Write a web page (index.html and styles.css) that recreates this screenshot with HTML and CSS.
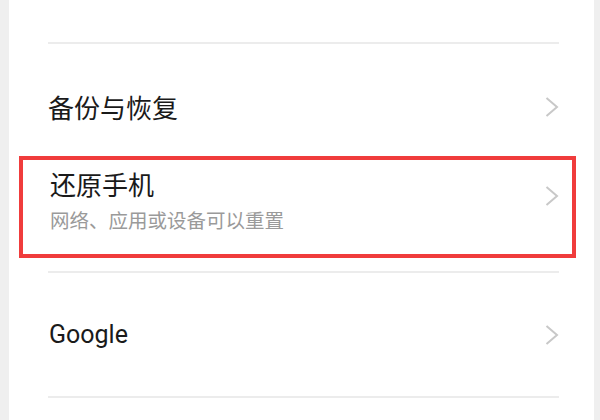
FILE: index.html
```html
<!DOCTYPE html>
<html>
<head>
    <meta charset="utf-8">
    <link rel="stylesheet" href="styles.css">
</head>
<body>

<div class="card">
    <div class="top-space"></div>
    <div class="divider"></div>

    <div class="row row-first">
        <span class="title">备份与恢复</span>
        <svg class="chevron" width="14" height="20" viewBox="0 0 14 20"><polyline points="1.5,1 12,10 1.5,19"/></svg>
    </div>

    <div class="row-marked">
        <div class="texts">
            <div class="title">还原手机</div>
            <div class="sub">网络、应用或设备可以重置</div>
        </div>
        <svg class="chevron chevron-up" width="14" height="20" viewBox="0 0 14 20"><polyline points="1.5,1 12,10 1.5,19"/></svg>
    </div>

    <div class="divider divider-mid"></div>

    <div class="row row-google">
        <span class="title latin">Google</span>
        <svg class="chevron" width="14" height="20" viewBox="0 0 14 20"><polyline points="1.5,1 12,10 1.5,19"/></svg>
    </div>

    <div class="divider"></div>
</div>

</body>
</html>
```

FILE: styles.css
```css
html, body {
    height: 100%;
}
body {
    margin: 0;
    padding: 0;
    background-color: #efefef;
    font-family: "Noto Sans CJK SC", "Noto Sans", sans-serif;
    overflow: hidden;
}
.card {
    background-color: #fff;
    margin: 0 6px 0 9px;
    height: 100%;
}
.top-space {
    height: 42px;
}
.divider {
    height: 2px;
    background-color: #ececec;
    margin: 0 35px 0 39px;
}
.divider-mid {
    margin-top: 13px;
}
.row {
    display: flex;
    align-items: center;
    justify-content: space-between;
    padding: 0 35px 0 39px;
}
.row-first {
    padding-top: 49px;
    padding-bottom: 35px;
}
.row-google {
    padding-top: 48px;
    padding-bottom: 47px;
}
.title {
    font-size: 26px;
    line-height: 28px;
    color: #1a1a1a;
}
.latin {
    font-family: Roboto, "Noto Sans", sans-serif;
    font-size: 25px;
    padding-left: 1px;
}
.row-marked {
    display: flex;
    justify-content: space-between;
    align-items: flex-start;
    border: 4px solid #f03c3c;
    margin: 0 18px 0 10px;
    padding: 9px 13px 21px 27px;
}
.row-marked .title {
    line-height: 30px;
}
.sub {
    margin-top: 8px;
    font-size: 19.5px;
    line-height: 26px;
    color: #9a9a9a;
}
.chevron {
    fill: none;
    stroke: #c8c8c8;
    stroke-width: 2;
    flex-shrink: 0;
}
.chevron-up {
    margin-top: 17px;
}
```
